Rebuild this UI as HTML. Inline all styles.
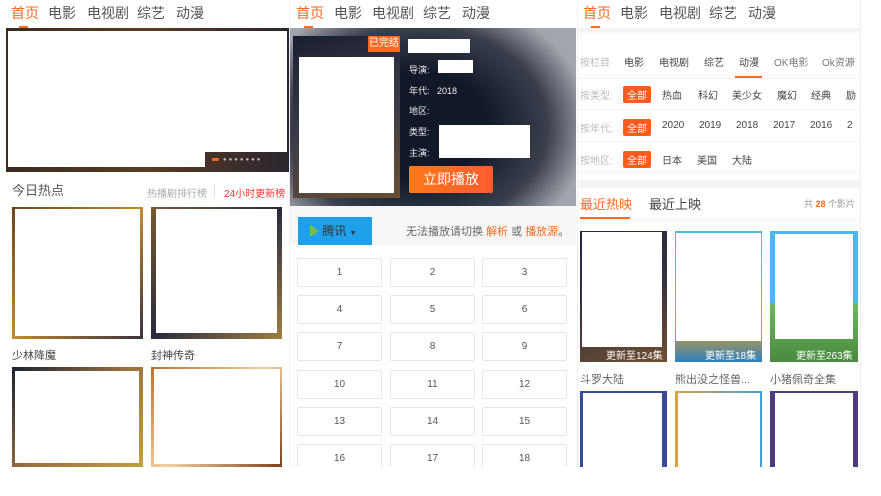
<!DOCTYPE html>
<html><head><meta charset="utf-8"><style>
*{margin:0;padding:0;box-sizing:border-box}
body{width:881px;height:496px;background:#fff;position:relative;overflow:hidden;font-family:"Liberation Sans","Noto Sans CJK SC",sans-serif;color:#333}
.a{position:absolute;white-space:nowrap}
.nav{font-size:14px;color:#555}
.nav span{position:absolute;top:3px}
.o{color:#ff6a1f}
.w{background:#fff;position:absolute}
.ep{position:absolute;width:85px;height:29px;border:1px solid #e6e6e6;border-radius:2px;font-size:10px;color:#555;text-align:center;line-height:27px}
.lbl{font-size:10px;color:#bbb}
.it{font-size:10px;color:#444}
.tag{background:#ff5a1f;color:#fff;font-size:10px;padding:1px 4px;border-radius:2px}
.t{font-size:11px;color:#444}
</style></head><body>
<!-- panel 1 -->
<div class="nav"><span class="o" style="left:11px">首页</span><span style="left:48px">电影</span><span style="left:87px">电视剧</span><span style="left:137px">综艺</span><span style="left:176px">动漫</span></div>
<div class="a" style="left:19px;top:26px;width:9px;height:2px;background:#ff6a1f"></div>
<div class="a" style="left:6px;top:28px;width:283px;height:144px;background:linear-gradient(90deg,#3a2a20,#5a3c22,#2a2530)"></div>
<div class="w" style="left:8px;top:31px;width:279px;height:121px"></div>
<div class="w" style="left:8px;top:152px;width:197px;height:15px"></div>
<div class="a" style="left:212px;top:158px;width:7px;height:3px;background:#ff6a1f;border-radius:2px"></div>
<div class="a" style="left:223px;top:157px;font-size:6px;color:#bbb;letter-spacing:2px">●●●●●●●</div>
<div class="a" style="left:12px;top:180px;font-size:13px;color:#555">今日热点</div>
<div class="a" style="left:147px;top:185px;font-size:10px;color:#aaa">热播剧排行榜</div>
<div class="a" style="left:214px;top:185px;width:1px;height:11px;background:#ddd"></div>
<div class="a" style="left:224px;top:185px;font-size:10px;color:#f33">24小时更新榜</div>
<div class="a" style="left:12px;top:207px;width:131px;height:132px;background:linear-gradient(135deg,#6b4520,#c08a30,#3a3040)"></div>
<div class="w" style="left:15px;top:209px;width:125px;height:127px"></div>
<div class="a" style="left:151px;top:207px;width:131px;height:132px;background:linear-gradient(135deg,#7a5a30,#2a2a40,#a08040)"></div>
<div class="w" style="left:156px;top:209px;width:121px;height:124px"></div>
<div class="a t" style="left:12px;top:347px">少林降魔</div>
<div class="a t" style="left:151px;top:347px">封神传奇</div>
<div class="a" style="left:12px;top:367px;width:131px;height:100px;background:linear-gradient(135deg,#1a2030,#9a7040,#c0a040)"></div>
<div class="w" style="left:15px;top:371px;width:124px;height:92px"></div>
<div class="a" style="left:151px;top:367px;width:131px;height:100px;background:linear-gradient(135deg,#c07030,#f0d0a0,#804020)"></div>
<div class="w" style="left:154px;top:369px;width:126px;height:95px"></div>
<div class="a" style="left:289px;top:0;width:1px;height:467px;background:#eee"></div>

<!-- panel 2 -->
<div class="nav"><span class="o" style="left:296px">首页</span><span style="left:334px">电影</span><span style="left:372px">电视剧</span><span style="left:423px">综艺</span><span style="left:462px">动漫</span></div>
<div class="a" style="left:304px;top:26px;width:9px;height:2px;background:#ff6a1f"></div>
<div class="a" style="left:290px;top:28px;width:286px;height:178px;background:radial-gradient(ellipse 60% 75% at 45% 55%,#111827 40%,#3a3f4c 75%,#a4a6ad 100%)"></div>
<div class="a" style="left:293px;top:36px;width:107px;height:162px;background:linear-gradient(160deg,#1a2030,#3a3a4a,#6a5030)"></div>
<div class="w" style="left:299px;top:57px;width:95px;height:136px"></div>
<div class="a" style="left:368px;top:36px;width:32px;height:16px;background:#ff6a1f;color:#fff;font-size:10px;text-align:center;line-height:16px">已完结</div>
<div class="w" style="left:408px;top:39px;width:62px;height:14px"></div>
<div class="a" style="left:409px;top:63px;font-size:9px;color:#eee">导演:</div>
<div class="w" style="left:438px;top:60px;width:35px;height:13px"></div>
<div class="a" style="left:409px;top:84px;font-size:9px;color:#eee">年代: &nbsp;&nbsp;2018</div>
<div class="a" style="left:409px;top:104px;font-size:9px;color:#eee">地区:</div>
<div class="a" style="left:409px;top:125px;font-size:9px;color:#eee">类型:</div>
<div class="a" style="left:409px;top:146px;font-size:9px;color:#eee">主演:</div>
<div class="w" style="left:439px;top:125px;width:91px;height:33px"></div>
<div class="a" style="left:409px;top:166px;width:84px;height:27px;background:linear-gradient(90deg,#ff7a18,#ff5a30);border-radius:2px;color:#fff;font-size:14px;text-align:center;line-height:27px">立即播放</div>
<div class="a" style="left:290px;top:206px;width:286px;height:39px;background:#f6f6f6"></div>
<div class="a" style="left:298px;top:217px;width:74px;height:28px;background:#1fa0ea;color:#333;font-size:12px;line-height:28px;padding-left:12px">
<span style="display:inline-block;width:0;height:0;border-left:9px solid #7bc043;border-top:6px solid transparent;border-bottom:6px solid transparent;vertical-align:-2px"></span> 腾讯 <span style="font-size:7px">▼</span></div>
<div class="a" style="left:406px;top:223px;font-size:11px;color:#666">无法播放请切换 <span class="o">解析</span> 或 <span class="o">播放源</span>。</div>
<div class="a" style="left:290px;top:245px;width:287px;height:222px;overflow:hidden">
<div class="ep" style="left:7px;top:13px">1</div><div class="ep" style="left:100px;top:13px">2</div><div class="ep" style="left:192px;top:13px">3</div>
<div class="ep" style="left:7px;top:50px">4</div><div class="ep" style="left:100px;top:50px">5</div><div class="ep" style="left:192px;top:50px">6</div>
<div class="ep" style="left:7px;top:87px">7</div><div class="ep" style="left:100px;top:87px">8</div><div class="ep" style="left:192px;top:87px">9</div>
<div class="ep" style="left:7px;top:125px">10</div><div class="ep" style="left:100px;top:125px">11</div><div class="ep" style="left:192px;top:125px">12</div>
<div class="ep" style="left:7px;top:162px">13</div><div class="ep" style="left:100px;top:162px">14</div><div class="ep" style="left:192px;top:162px">15</div>
<div class="ep" style="left:7px;top:199px">16</div><div class="ep" style="left:100px;top:199px">17</div><div class="ep" style="left:192px;top:199px">18</div>
</div>
<div class="a" style="left:577px;top:0;width:1px;height:467px;background:#eee"></div>

<!-- panel 3 -->
<div class="nav"><span class="o" style="left:583px">首页</span><span style="left:620px">电影</span><span style="left:659px">电视剧</span><span style="left:709px">综艺</span><span style="left:748px">动漫</span></div>
<div class="a" style="left:591px;top:26px;width:9px;height:2px;background:#ff6a1f"></div>
<div class="a" style="left:578px;top:28px;width:282px;height:7px;background:linear-gradient(#eee,#fff)"></div>
<div class="a lbl" style="left:580px;top:54px">按栏目</div>
<div class="a it" style="left:624px;top:54px">电影</div><div class="a it" style="left:659px;top:54px">电视剧</div><div class="a it" style="left:704px;top:54px">综艺</div><div class="a it" style="left:739px;top:54px">动漫</div><div class="a it" style="left:774px;top:54px;color:#777">OK电影</div><div class="a it" style="left:822px;top:54px;color:#777">Ok资源</div>
<div class="a" style="left:735px;top:76px;width:27px;height:2px;background:#ff6a1f"></div>
<div class="a" style="left:578px;top:78px;width:282px;height:1px;background:#f2f2f2"></div>
<div class="a lbl" style="left:580px;top:87px">按类型:</div>
<div class="a tag" style="left:623px;top:86px">全部</div>
<div class="a it" style="left:662px;top:87px">热血</div><div class="a it" style="left:698px;top:87px">科幻</div><div class="a it" style="left:732px;top:87px">美少女</div><div class="a it" style="left:777px;top:87px">魔幻</div><div class="a it" style="left:811px;top:87px">经典</div><div class="a it" style="left:846px;top:87px">励</div>
<div class="a" style="left:578px;top:109px;width:282px;height:1px;background:#f2f2f2"></div>
<div class="a lbl" style="left:580px;top:120px">按年代:</div>
<div class="a tag" style="left:623px;top:119px">全部</div>
<div class="a it" style="left:662px;top:120px">2020</div><div class="a it" style="left:699px;top:120px">2019</div><div class="a it" style="left:736px;top:120px">2018</div><div class="a it" style="left:773px;top:120px">2017</div><div class="a it" style="left:810px;top:120px">2016</div><div class="a it" style="left:847px;top:120px">2</div>
<div class="a" style="left:578px;top:141px;width:282px;height:1px;background:#f2f2f2"></div>
<div class="a lbl" style="left:580px;top:152px">按地区:</div>
<div class="a tag" style="left:623px;top:151px">全部</div>
<div class="a it" style="left:662px;top:152px">日本</div><div class="a it" style="left:697px;top:152px">美国</div><div class="a it" style="left:732px;top:152px">大陆</div>
<div class="a" style="left:578px;top:172px;width:282px;height:1px;background:#f2f2f2"></div>
<div class="a" style="left:578px;top:180px;width:282px;height:8px;background:#f4f4f4"></div>
<div class="a" style="left:580px;top:194px;font-size:13px;color:#ff6a1f">最近热映</div>
<div class="a" style="left:649px;top:194px;font-size:13px;color:#444">最近上映</div>
<div class="a" style="left:804px;top:197px;font-size:9px;color:#999">共 <b class="o">28</b> 个影片</div>
<div class="a" style="left:580px;top:217px;width:50px;height:2px;background:#ff6a1f"></div>
<div class="a" style="left:580px;top:219px;width:280px;height:1px;background:#f2f2f2"></div>
<div class="a" style="left:580px;top:231px;width:87px;height:131px;background:linear-gradient(160deg,#222840,#3a3040,#705030)"></div>
<div class="w" style="left:582px;top:232px;width:80px;height:115px"></div>
<div class="a" style="left:606px;top:347px;font-size:10px;color:#fff">更新至124集</div>
<div class="a" style="left:675px;top:231px;width:87px;height:131px;background:linear-gradient(180deg,#40c0e0,#d0a030 75%,#3080c0)"></div>
<div class="w" style="left:676px;top:233px;width:85px;height:108px"></div>
<div class="a" style="left:705px;top:347px;font-size:10px;color:#fff">更新至18集</div>
<div class="a" style="left:770px;top:231px;width:88px;height:131px;background:linear-gradient(180deg,#4ab8e8 55%,#70b860 55%,#4a8a40)"></div>
<div class="w" style="left:775px;top:234px;width:78px;height:105px"></div>
<div class="a" style="left:796px;top:347px;font-size:10px;color:#fff">更新至263集</div>
<div class="a t" style="left:580px;top:371px;color:#666">斗罗大陆</div>
<div class="a t" style="left:675px;top:371px;color:#666">熊出没之怪兽...</div>
<div class="a t" style="left:770px;top:371px;color:#666">小猪佩奇全集</div>
<div class="a" style="left:580px;top:391px;width:87px;height:76px;background:#3a4a9a"></div>
<div class="w" style="left:583px;top:393px;width:79px;height:74px"></div>
<div class="a" style="left:675px;top:391px;width:87px;height:76px;background:linear-gradient(90deg,#e0a040,#40a0d0)"></div>
<div class="w" style="left:678px;top:393px;width:82px;height:74px"></div>
<div class="a" style="left:770px;top:391px;width:88px;height:76px;background:#503a80"></div>
<div class="w" style="left:775px;top:393px;width:78px;height:74px"></div>
<div class="a" style="left:860px;top:0;width:1px;height:467px;background:#eee"></div>
</body></html>
